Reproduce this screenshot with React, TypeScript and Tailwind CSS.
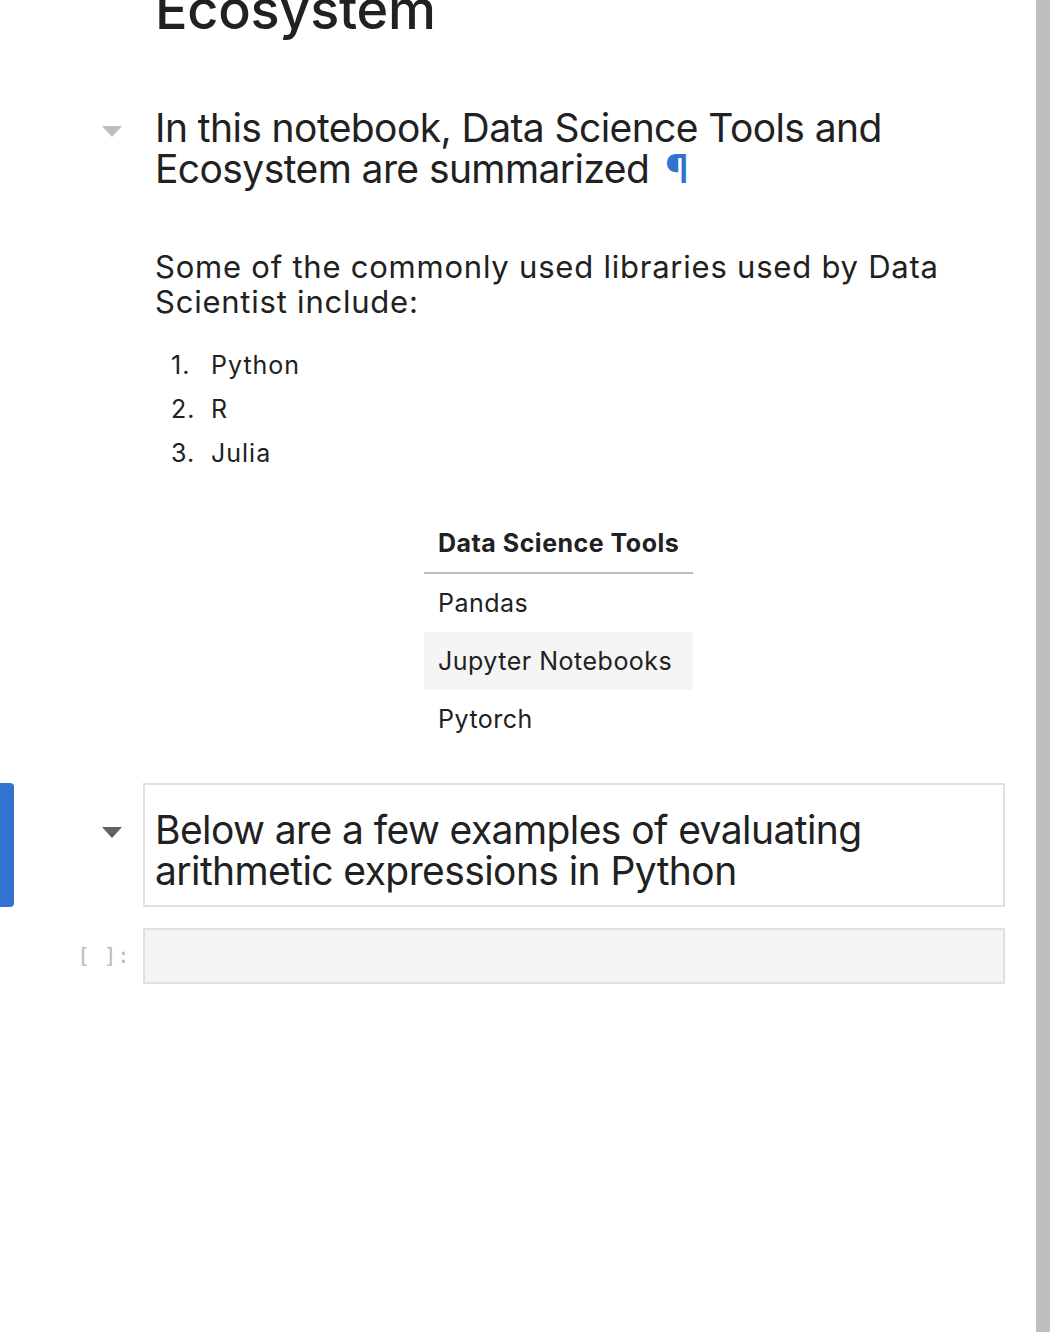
import React from 'react';

const font = { fontFamily: 'Inter, "Noto Sans", sans-serif' };

const Collapser: React.FC<{ active?: boolean }> = ({ active }) => (
  <div className="w-[14px] shrink-0 self-stretch">
    {active && <div className="h-full w-[14px] rounded-r-[4px] bg-[#3273d1]" />}
  </div>
);

const Caret: React.FC<{ dark?: boolean; top: string }> = ({ dark, top }) => (
  <div className={`w-[129px] shrink-0 flex justify-end pr-[21px] ${top}`}>
    <svg width="20" height="12" viewBox="0 0 20 12">
      <path d="M0 0 L20 0 L10 11 Z" fill={dark ? '#616161' : '#bdbdbd'} />
    </svg>
  </div>
);

const languages = ['Python', 'R', 'Julia'];
const tools = ['Pandas', 'Jupyter Notebooks', 'Pytorch'];

const App: React.FC = () => {
  return (
    <div className="flex h-[1332px] w-[1050px] overflow-hidden bg-white text-[#212121]" style={font}>
      <main className="flex-1 flex flex-col">
        {/* title cell, scrolled partly out of view */}
        <div className="flex -mt-[17px]">
          <Collapser />
          <div className="w-[129px] shrink-0" />
          <div className="flex-1 mr-[31px] pl-[12px]">
            <h1 className="text-[54px] leading-[54px] font-medium tracking-[-0.005em]">Ecosystem</h1>
          </div>
        </div>

        <div className="flex mt-[70px]">
          <Collapser />
          <Caret top="pt-[19px]" />
          <div className="flex-1 mr-[31px] pl-[12px]">
            <h2 className="text-[39px] leading-[41px] font-normal tracking-[-0.015em]">
              In this notebook, Data Science Tools and Ecosystem are summarized
              <span className="ml-[16px] text-[#3273d1] font-semibold">¶</span>
            </h2>
          </div>
        </div>

        <div className="flex mt-[60px]">
          <Collapser />
          <div className="w-[129px] shrink-0" />
          <div className="flex-1 mr-[31px] pl-[12px]">
            <h4 className="text-[31px] leading-[35px] font-normal tracking-[0.025em] pr-[40px]">
              Some of the commonly used libraries used by Data Scientist include:
            </h4>
            <ol className="mt-[24px] text-[25px] leading-[44px] tracking-[0.04em]">
              {languages.map((lang, i) => (
                <li key={lang} className="flex">
                  <span className="w-[56px] pl-[16px] shrink-0">{i + 1}.</span>
                  <span>{lang}</span>
                </li>
              ))}
            </ol>
            <table className="mt-[39px] ml-[269px] border-collapse text-[25px] leading-[28px] tracking-[0.02em]">
              <thead>
                <tr>
                  <th className="px-[14px] py-[15px] text-left font-bold border-b-2 border-[#bdbdbd]">
                    Data Science Tools
                  </th>
                </tr>
              </thead>
              <tbody>
                {tools.map((tool, i) => (
                  <tr key={tool} className={i % 2 === 1 ? 'bg-[#f5f5f5]' : ''}>
                    <td className="px-[14px] py-[15px]">{tool}</td>
                  </tr>
                ))}
              </tbody>
            </table>
          </div>
        </div>

        <div className="flex mt-[35px]">
          <Collapser active />
          <Caret dark top="pt-[44px]" />
          <div className="flex-1 mr-[31px] border-2 border-[#e0e0e0] pl-[10px] pt-[24px] pb-[14px]">
            <h2 className="text-[39px] leading-[41px] font-normal tracking-[-0.015em]">
              Below are a few examples of evaluating arithmetic expressions in Python
            </h2>
          </div>
        </div>

        <div className="flex mt-[21px]">
          <Collapser />
          <div
            className="w-[129px] shrink-0 flex items-center justify-end pr-[13px] pb-[2px] text-[22px] text-[#bdbdbd]"
            style={{ fontFamily: '"DejaVu Sans Mono", "Liberation Mono", monospace' }}
          >
            [ ]:
          </div>
          <div className="flex-1 mr-[31px] h-[56px] border-2 border-[#e0e0e0] bg-[#f5f5f5]" />
        </div>
      </main>
      <div className="w-[14px] shrink-0 bg-[#bebebe]" />
    </div>
  );
};

export default App;
